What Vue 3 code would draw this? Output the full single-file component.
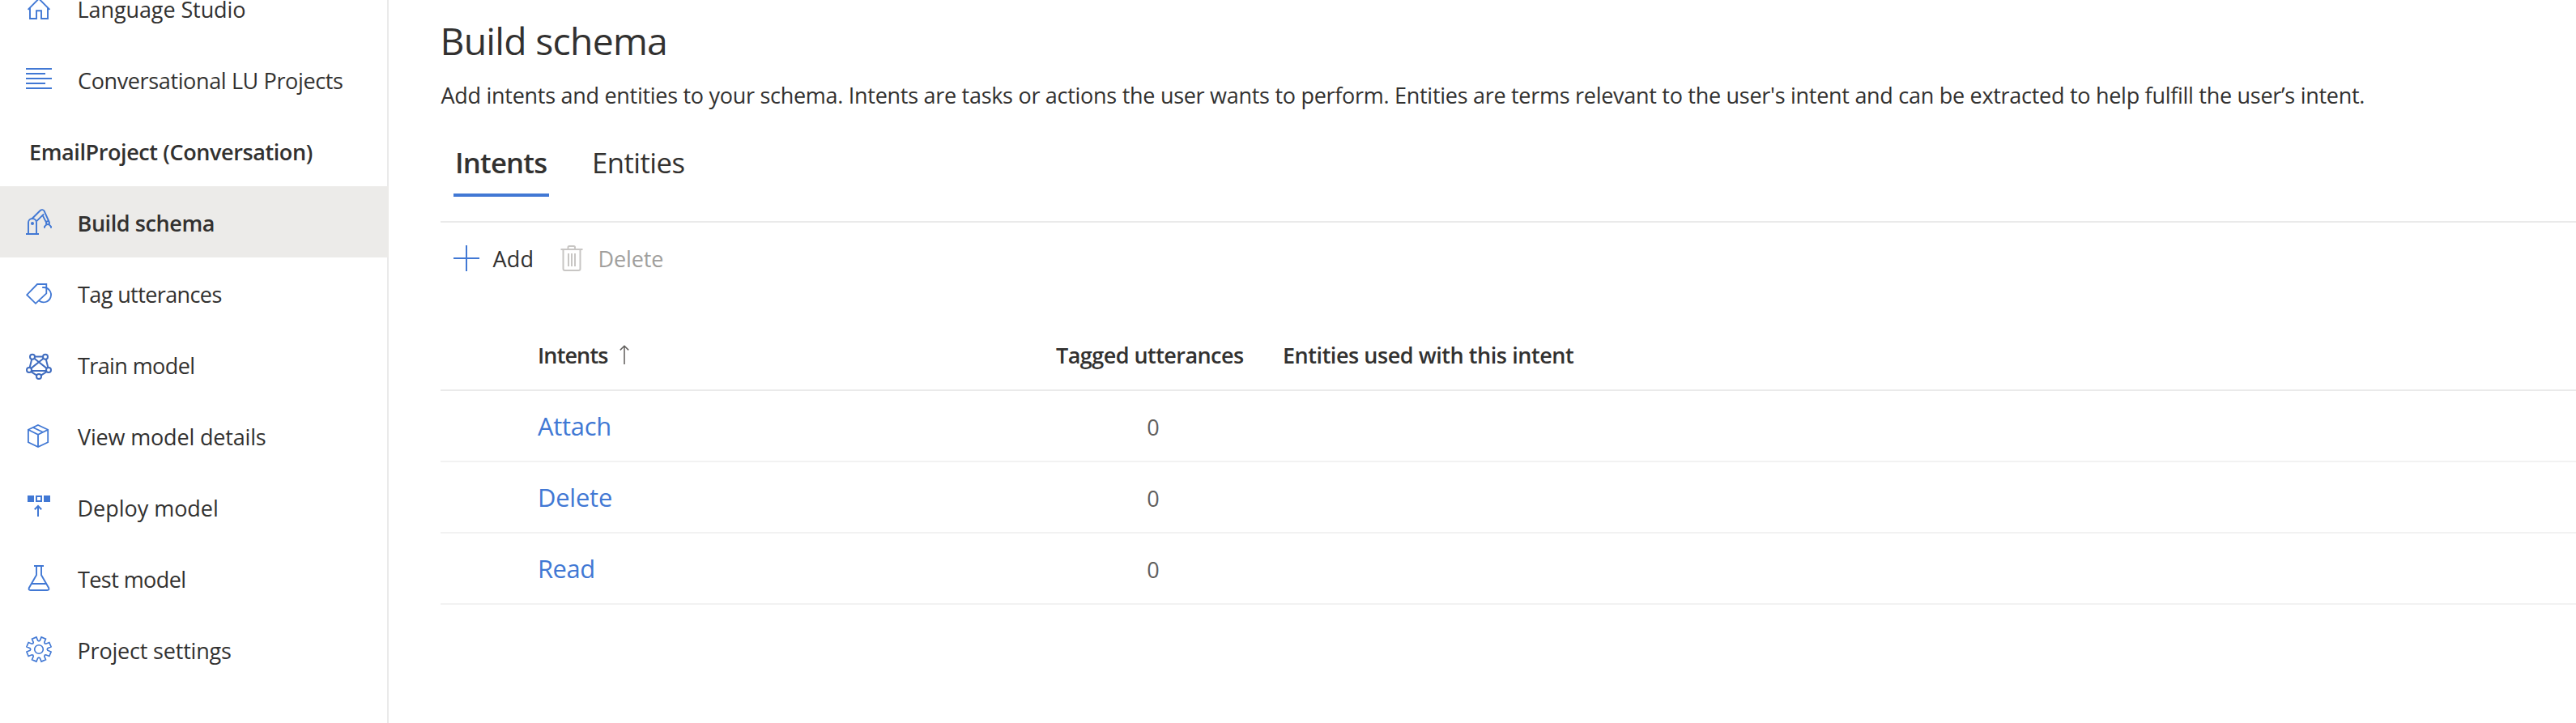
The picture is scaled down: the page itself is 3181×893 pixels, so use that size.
<script setup>
const nav = [
  { icon: 'home', label: 'Language Studio', ls: -0.09, x: 0 },
  { icon: 'lines', label: 'Conversational LU Projects', ls: -0.37, x: 0.5 },
  { header: true, label: 'EmailProject (Conversation)', ls: -0.4 },
  { icon: 'robot', label: 'Build schema', ls: -0.42, selected: true, x: 0 },
  { icon: 'tag', label: 'Tag utterances', ls: -0.6, x: 0.5 },
  { icon: 'train', label: 'Train model', ls: -0.6, x: 0.5 },
  { icon: 'box', label: 'View model details', ls: -0.17, x: 0.5 },
  { icon: 'deploy', label: 'Deploy model', ls: -0.03, x: 0 },
  { icon: 'flask', label: 'Test model', ls: -0.58, x: 0.5 },
  { icon: 'gear', label: 'Project settings', ls: -0.19, x: 0 },
]

const rows = [
  { name: 'Attach', count: 0, ls: -0.24 },
  { name: 'Delete', count: 0, ls: -0.2 },
  { name: 'Read', count: 0, ls: -0.45 },
]

// Eight-toothed cog outline centred on (16, 16)
const cog = (() => {
  const pts = []
  const at = (deg, r) => {
    const a = (deg * Math.PI) / 180
    pts.push(`${(16 + r * Math.cos(a)).toFixed(2)} ${(16 + r * Math.sin(a)).toFixed(2)}`)
  }
  for (let k = 0; k < 8; k++) {
    const c = 22.5 + 45 * k
    at(c - 15.5, 11)
    at(c - 11, 15.4)
    at(c + 11, 15.4)
    at(c + 15.5, 11)
    at(c + 22.5, 10.2)
  }
  return `M${pts.join('L')}Z`
})()
</script>

<template>
  <div class="page">
    <nav class="side">
      <div
        v-for="item in nav"
        :key="item.label"
        class="item"
        :class="{ selected: item.selected, header: item.header }"
      >
        <svg v-if="item.icon" class="icon" viewBox="0 0 32 32">
          <g v-if="item.icon === 'home'">
            <path d="M2.6 17.8 16 4.4 29.4 17.8M5 15.6V29h8V19.2h6V29h8V15.6" stroke-width="1.9" />
          </g>
          <g v-else-if="item.icon === 'lines'">
            <path d="M0 3h32M0 9h24M0 15h32M0 21h24M0 27h32" />
          </g>
          <g v-else-if="item.icon === 'robot'" stroke-width="1.9">
            <path d="M0 31h16M3 31V17a5 5 0 0 1 10 0v14" />
            <circle cx="8" cy="18" r="2" class="solid" stroke="none" />
            <path d="M7.6 12 17.7 2a3.2 3.2 0 0 1 5 .8L28.4 15.5M13.2 15.2l8.9-8.9M20.6 7.8l4.2 8.4" />
            <circle cx="27" cy="17.2" r="2" />
            <path d="M23 23.8V21.8l2.4-2.4M31 23.8V21.8l-2.4-2.4" />
          </g>
          <g v-else-if="item.icon === 'tag'" stroke-width="1.8">
            <path d="M14 5H25.3V16.3L12 28.8 1.2 18.2ZM20.2 9h1.6a9.2 9.2 0 1 1-5.6 16.5" />
          </g>
          <g v-else-if="item.icon === 'train'" class="deep" stroke-width="2">
            <path d="M11 6.4H21M7.3 9.6 4.7 19.8M24.7 9.6 27.3 19.8M10.4 8.8 25.6 20.9M21.6 8.8 6.4 20.9M7 24H25M6.8 25.4 13 29.4M25.2 25.4 19 29.4" />
            <circle cx="8" cy="6.8" r="3" />
            <circle cx="24" cy="6.8" r="3" />
            <circle cx="4" cy="23" r="3" />
            <circle cx="28" cy="23" r="3" />
            <circle cx="16" cy="31" r="3" />
          </g>
          <g v-else-if="item.icon === 'box'" stroke-width="1.8">
            <path d="M15 3 27.2 8.8V24.2L15 30 2.9 24.2V8.8ZM2.9 8.8 15 14.7 27.2 8.8M15 14.7V30M8.8 6 21 11.8" />
          </g>
          <g v-else-if="item.icon === 'deploy'">
            <path class="solid" d="M2 2h8v8H2zM22 2h8v8h-8z" stroke="none" />
            <path d="M13 3h6v6h-6zM15 28V15M10.8 19.2 15 15l4.2 4.2" />
          </g>
          <g v-else-if="item.icon === 'flask'" stroke-width="1.9">
            <path d="M10 1H22M13 1V12.2L3.8 28.2Q2.9 31 5.6 31H26.4Q29.1 31 28.2 28.2L19 12.2V1M7 23H25" />
          </g>
          <g v-else-if="item.icon === 'gear'" stroke-width="1.6">
            <path :d="cog" />
            <circle cx="16" cy="16" r="5.3" />
          </g>
        </svg>
        <span :style="{ letterSpacing: item.ls + 'px', marginLeft: (item.x || 0) + 'px' }">{{ item.label }}</span>
      </div>
    </nav>

    <main class="main">
      <h1>Build schema</h1>
      <p class="desc">Add intents and entities to your schema. Intents are tasks or actions the user wants to perform. Entities are terms relevant to the user's intent and can be extracted to help fulfill the user’s intent.</p>

      <div class="tabs">
        <div class="tab active">Intents</div>
        <div class="tab">Entities</div>
      </div>

      <div class="toolbar">
        <button class="cmd add">
          <svg class="icon" viewBox="0 0 32 32"><path d="M16 0V32M0 16H32" /></svg>
          <span>Add</span>
        </button>
        <button class="cmd delete" disabled>
          <svg class="icon trash" viewBox="0 0 28 32">
            <path d="M.5 5H27.5M9.5 5V2.6Q9.5 1 11 1H16.5Q18 1 18 2.6V5M3.5 5V29Q3.5 31 5.5 31H22.5Q24.5 31 24.5 29V5M10 10V26M14 10V26M18 10V26" />
          </svg>
          <span>Delete</span>
        </button>
      </div>

      <div class="table">
        <div class="row head">
          <div class="name">
            <span>Intents</span>
            <svg class="sort" viewBox="0 0 12 24"><path d="M6 24V1M.8 6.4 6 1.2 11.2 6.4" /></svg>
          </div>
          <div class="tagged">Tagged utterances</div>
          <div class="used">Entities used with this intent</div>
        </div>
        <div v-for="row in rows" :key="row.name" class="row">
          <a class="name link" :style="{ letterSpacing: row.ls + 'px' }">{{ row.name }}</a>
          <div class="count">{{ row.count }}</div>
        </div>
      </div>
    </main>
  </div>
</template>

<style>
body {
  background: #fff;
  overflow: hidden;
}
</style>

<style scoped>
.page {
  display: flex;
  width: 100vw;
  height: 100vh;
  overflow: hidden;
  font-family: "Open Sans", "Noto Sans", sans-serif;
  font-size: 27px;
  color: #323130;
  background: #fff;
}

.icon {
  flex: none;
  width: 32px;
  height: 32px;
  overflow: visible;
  fill: none;
  stroke: #4178d4;
  stroke-width: 2;
}

.solid {
  fill: #4178d4;
}

.deep {
  stroke: #3f6cbf;
}

.side {
  flex: none;
  box-sizing: border-box;
  width: 480px;
  height: calc(100% + 34px);
  margin-top: -34px;
  border-right: 2px solid #eaeaea;
}

.item {
  display: flex;
  align-items: center;
  gap: 31.5px;
  box-sizing: border-box;
  width: 480px;
  height: 88px;
  padding-left: 32px;
  white-space: nowrap;
}

.item span {
  padding-top: 3px;
}

.item.header {
  padding-left: 36px;
  font-weight: 600;
}

.item.selected {
  background: #ecebe9;
  font-weight: 600;
}

.main {
  flex: 1;
  min-width: 0;
  padding: 19px 0 0 64px;
}

h1 {
  margin: 0 0 14.5px -0.5px;
  font-size: 46.3px;
  font-weight: 400;
  line-height: 64px;
  letter-spacing: -0.72px;
}

.desc {
  margin: 0 0 24.5px 0.5px;
  line-height: 40px;
  letter-spacing: -0.284px;
  white-space: nowrap;
}

.tabs {
  display: flex;
  gap: 51px;
  padding: 0 0 30px 16px;
  border-bottom: 2px solid #eaeaea;
}

.tab {
  box-sizing: border-box;
  height: 81px;
  padding-left: 2px;
  border-bottom: 4px solid transparent;
  font-size: 34.7px;
  line-height: 77px;
  letter-spacing: -0.55px;
}

.tab.active {
  width: 118px;
  border-bottom-color: #4178d4;
  font-weight: 600;
  letter-spacing: -0.82px;
}

.toolbar {
  display: flex;
  align-items: center;
  height: 88px;
  padding-left: 16px;
}

.cmd {
  display: flex;
  align-items: center;
  padding: 0;
  border: 0;
  background: none;
  color: inherit;
  font: inherit;
}

.cmd span {
  padding-top: 1px;
}

.add {
  gap: 16.6px;
  width: 132px;
  letter-spacing: 0.2px;
}

.delete {
  gap: 18.5px;
  color: #a19f9d;
  letter-spacing: -0.13px;
}

.trash {
  width: 28px;
  stroke: #c8c6c4;
}

.table {
  margin-top: 32px;
}

.row {
  display: grid;
  grid-template-columns: 640px 280px 1fr;
  align-items: center;
  box-sizing: border-box;
  height: 88px;
  padding-left: 120px;
  border-bottom: 2px solid #f2f2f2;
  white-space: nowrap;
}

.head {
  border-bottom-color: #eaeaea;
  font-weight: 600;
}

.head .name {
  display: flex;
  align-items: center;
  letter-spacing: -0.88px;
}

.sort {
  width: 12px;
  height: 24px;
  margin-left: 14.5px;
  fill: none;
  stroke: #605e5c;
  stroke-width: 1.5;
}

.tagged {
  letter-spacing: -0.546px;
}

.used {
  letter-spacing: -0.45px;
}

.link {
  color: #4178d4;
  font-size: 30.9px;
}

.count {
  width: 240px;
  padding-top: 2px;
  color: #605e5c;
  text-align: center;
}
</style>
